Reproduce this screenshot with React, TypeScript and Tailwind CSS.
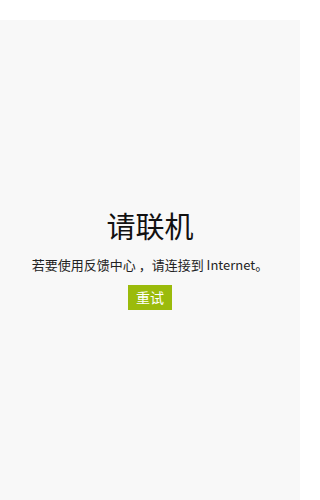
import React from "react";

export default function App() {
  return (
    <div
      className="w-[300px] h-[500px] flex flex-col bg-[#f8f8f8]"
      style={{ fontFamily: '"Noto Sans CJK SC", "Noto Sans", sans-serif' }}
    >
      <div className="h-[20px] bg-white shrink-0" />
      <div className="flex flex-col items-center pt-[191px]">
        <div className="text-[29px] leading-[29px] text-[#111]">请联机</div>
        <div className="mt-[17px] text-[13px] leading-[16px] text-[#222] whitespace-nowrap">
          若要使用反馈中心 ，请连接到 Internet。
        </div>
        <button className="mt-[12px] w-[44px] h-[25px] bg-[#9bbb0b] text-white text-[14px] leading-[25px] flex items-center justify-center">
          重试
        </button>
      </div>
    </div>
  );
}
